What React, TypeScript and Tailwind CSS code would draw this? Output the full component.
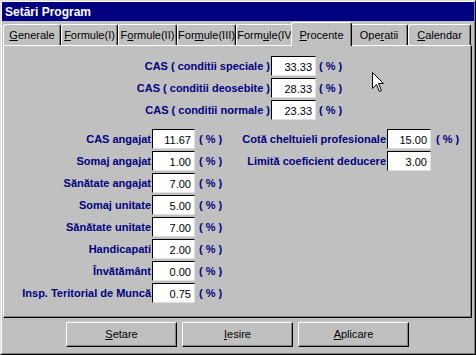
const tabs = [
  { pre: '', u: 'G', post: 'enerale', w: 'w-[58px]' },
  { pre: '', u: 'F', post: 'ormule(I)', w: 'w-[57px]' },
  { pre: 'F', u: 'o', post: 'rmule(II)', w: 'w-[59px]' },
  { pre: 'For', u: 'm', post: 'ule(III)', w: 'w-[59px]' },
  { pre: 'Form', u: 'u', post: 'le(IV', w: 'w-[57px]' },
  { pre: '', u: 'P', post: 'rocente', w: 'w-[61px]', active: true },
  { pre: 'Ope', u: 'r', post: 'atii', w: 'w-[58px]' },
  { pre: '', u: 'C', post: 'alendar', w: 'w-[63px]' },
];

const casRows = [
  { label: 'CAS ( conditii speciale )', value: '33.33' },
  { label: 'CAS ( conditii deosebite )', value: '28.33' },
  { label: 'CAS ( conditii normale )', value: '23.33' },
];

const leftRows = [
  { label: 'CAS angajat', value: '11.67' },
  { label: 'Somaj angajat', value: '1.00' },
  { label: 'Sănătate angajat', value: '7.00' },
  { label: 'Somaj unitate', value: '5.00' },
  { label: 'Sănătate unitate', value: '7.00' },
  { label: 'Handicapati', value: '2.00' },
  { label: 'Învătământ', value: '0.00' },
  { label: 'Insp. Teritorial de Muncă', value: '0.75' },
];

function Field({ value, w }: { value: string; w: string }) {
  return (
    <div
      className={`${w} h-[20px] flex-none bg-white border border-t-black border-l-black border-r-[#dfdfdf] border-b-[#dfdfdf] text-right pr-[3px] pt-[2px] leading-[16px] text-[11px] text-black`}
    >
      {value}
    </div>
  );
}

function Pct({ ml }: { ml: string }) {
  return <span className={`${ml} font-bold text-[11px] text-[#000080] whitespace-nowrap`}>( % )</span>;
}

function Button({ u, rest }: { u: string; rest: string }) {
  return (
    <div className="w-[111px] h-[25px] flex items-center justify-center bg-[#c0c0c0] border border-t-white border-l-white border-r-black border-b-black shadow-[inset_-1px_-1px_0_#808080] text-[11px] text-black">
      <span>
        <u>{u}</u>
        {rest}
      </span>
    </div>
  );
}

export default function App() {
  return (
    <div className="w-[476px] h-[355px] bg-[#c0c0c0] border border-t-[#dfdfdf] border-l-[#dfdfdf] border-r-black border-b-black font-['Liberation_Sans',Arial,sans-serif] select-none">
      <div className="h-full border border-t-white border-l-white border-r-[#808080] border-b-[#808080] flex flex-col">
        {/* Title bar */}
        <div className="h-[19px] flex-none bg-[#000080] flex items-center px-[3px]">
          <span className="text-white font-bold text-[12px]">Setări Program</span>
        </div>

        <div className="flex flex-col pl-[1px] pr-[2px]">
          {/* Tabs */}
          <div className="h-[24px] flex items-end">
            {tabs.map((t, i) => (
              <div
                key={i}
                className={
                  t.active
                    ? `${t.w} -mx-[2px] h-[24px] -mb-[1px] relative z-10 bg-[#c0c0c0] border-t border-l border-t-white border-l-white border-r border-r-black shadow-[inset_-1px_0_0_#808080] rounded-t-[3px] flex items-start justify-center pt-[4px] text-[11px] text-black whitespace-nowrap overflow-hidden`
                    : `${t.w} h-[21px] bg-[#c0c0c0] border-t border-l border-t-white border-l-white border-r border-r-black shadow-[inset_-1px_0_0_#808080] rounded-t-[3px] flex items-center justify-center text-[11px] text-black whitespace-nowrap overflow-hidden`
                }
              >
                <span>
                  {t.pre}
                  <u>{t.u}</u>
                  {t.post}
                </span>
              </div>
            ))}
          </div>

          {/* Panel */}
          <div className="h-[273px] relative border border-t-white border-l-white border-r-black border-b-black shadow-[inset_-1px_-1px_0_#808080] flex flex-col pt-[10px]">
            {/* CAS rows */}
            <div className="flex flex-col gap-[2px]">
              {casRows.map((r) => (
                <div key={r.label} className="h-[20px] flex items-center">
                  <div className="w-[267px] flex-none text-right pr-[1px] font-bold text-[11px] text-[#000080] whitespace-nowrap">
                    {r.label}
                  </div>
                  <Field value={r.value} w="w-[45px]" />
                  <Pct ml="ml-[3px]" />
                </div>
              ))}
            </div>

            <div className="flex mt-[9px]">
              {/* Left column */}
              <div className="w-[231px] flex-none flex flex-col gap-[2px]">
                {leftRows.map((r) => (
                  <div key={r.label} className="h-[20px] flex items-center">
                    <div className="w-[148px] flex-none text-right pr-[1px] font-bold text-[11px] text-[#000080] whitespace-nowrap">
                      {r.label}
                    </div>
                    <Field value={r.value} w="w-[43px]" />
                    <Pct ml="ml-[4px]" />
                  </div>
                ))}
              </div>

              {/* Right column */}
              <div className="flex flex-col gap-[2px]">
                <div className="h-[20px] flex items-center">
                  <div className="w-[152px] flex-none text-right pr-[1px] font-bold text-[11px] text-[#000080] whitespace-nowrap">
                    Cotă cheltuieli profesionale
                  </div>
                  <Field value="15.00" w="w-[44px]" />
                  <Pct ml="ml-[5px]" />
                </div>
                <div className="h-[20px] flex items-center">
                  <div className="w-[152px] flex-none text-right pr-[1px] font-bold text-[11px] text-[#000080] whitespace-nowrap">
                    Limită coeficient deducere
                  </div>
                  <Field value="3.00" w="w-[44px]" />
                </div>
              </div>
            </div>

            {/* Mouse cursor */}
            <svg
              className="absolute left-[368px] top-[26px]"
              width="13"
              height="21"
              viewBox="0 0 13 21"
            >
              <path
                d="M0.5 0.5 L0.5 16.5 L4.5 12.5 L7.5 19.5 L9.5 18.5 L6.5 11.5 L11.5 11.5 Z"
                fill="white"
                stroke="black"
                strokeWidth="1"
              />
            </svg>
          </div>

          {/* Buttons */}
          <div className="mt-[4px] flex justify-center gap-[5px]">
            <Button u="S" rest="etare" />
            <Button u="I" rest="esire" />
            <Button u="A" rest="plicare" />
          </div>
        </div>
      </div>
    </div>
  );
}
